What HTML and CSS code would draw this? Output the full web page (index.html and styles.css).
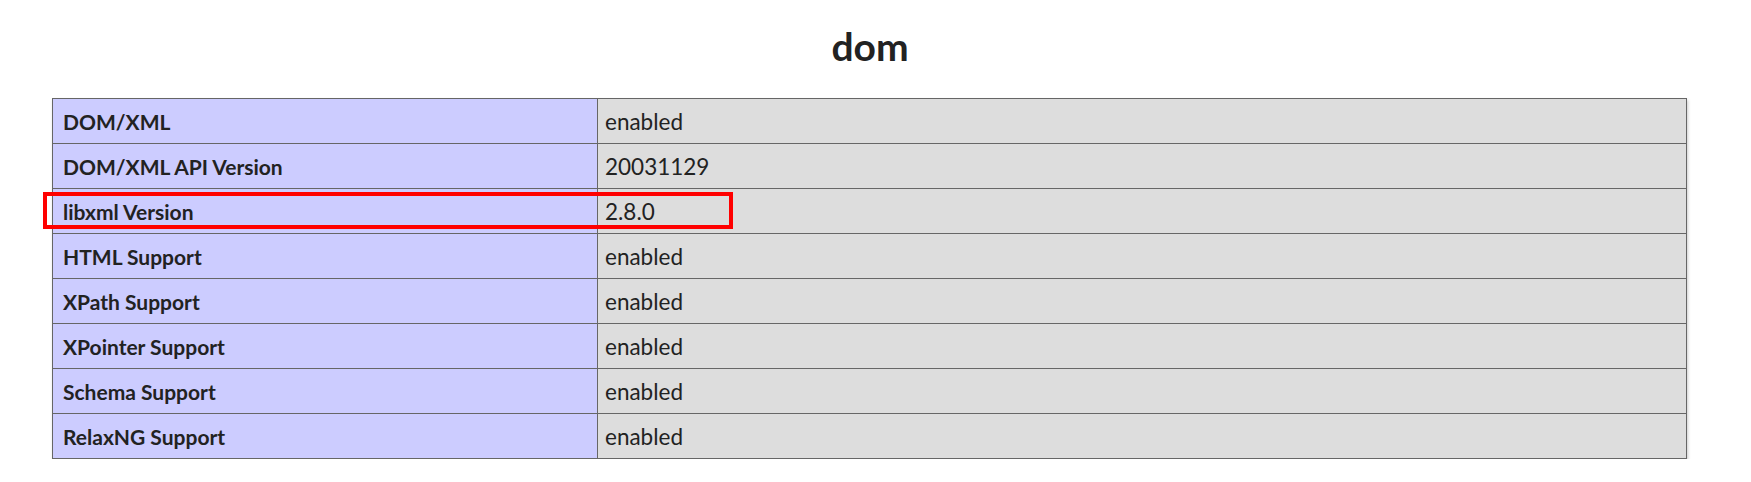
FILE: index.html
```html
<!DOCTYPE html>
<html>
<head>
<meta charset="utf-8">
<link rel="stylesheet" href="styles.css">
</head>
<body>
<div class="page">
  <h2 class="title">dom</h2>
  <div class="table-wrap">
    <table class="info">
      <tr><td class="e">DOM/XML</td><td class="v">enabled</td></tr>
      <tr><td class="e">DOM/XML API Version</td><td class="v">20031129</td></tr>
      <tr><td class="e">libxml Version</td><td class="v">2.8.0</td></tr>
      <tr><td class="e">HTML Support</td><td class="v">enabled</td></tr>
      <tr><td class="e">XPath Support</td><td class="v">enabled</td></tr>
      <tr><td class="e">XPointer Support</td><td class="v">enabled</td></tr>
      <tr><td class="e">Schema Support</td><td class="v">enabled</td></tr>
      <tr><td class="e">RelaxNG Support</td><td class="v">enabled</td></tr>
    </table>
    <div class="highlight"></div>
  </div>
</div>
</body>
</html>
```
FILE: styles.css
```css
html, body {
  margin: 0;
  padding: 0;
  background: #fff;
}
.page {
  font-family: Lato, "Noto Sans", "Liberation Sans", sans-serif;
  color: #222;
  padding-top: 20px;
}
.title {
  margin: 0 0 26px 0;
  padding-right: 11px;
  text-align: center;
  font-size: 39px;
  line-height: 52px;
  font-weight: 700;
  color: #222;
}
.table-wrap {
  position: relative;
  margin-left: 52px;
  width: 1635px;
}
.info {
  border-collapse: collapse;
  width: 1635px;
  box-shadow: 1px 2px 3px #ccc;
  border: 1px solid #666;
}
.info td {
  border: 1px solid #666;
  height: 45px;
  padding: 0 10px;
  font-size: 21px;
  box-sizing: border-box;
  vertical-align: middle;
}
.info td.e {
  width: 545px;
  background: #ccf;
  font-weight: 700;
}
.info td.v {
  background: #ddd;
  padding-left: 7px;
  font-size: 22.5px;
}
.highlight {
  position: absolute;
  left: -9px;
  top: 94px;
  width: 690px;
  height: 37px;
  border: 4px solid #f00;
  box-sizing: border-box;
}
```
